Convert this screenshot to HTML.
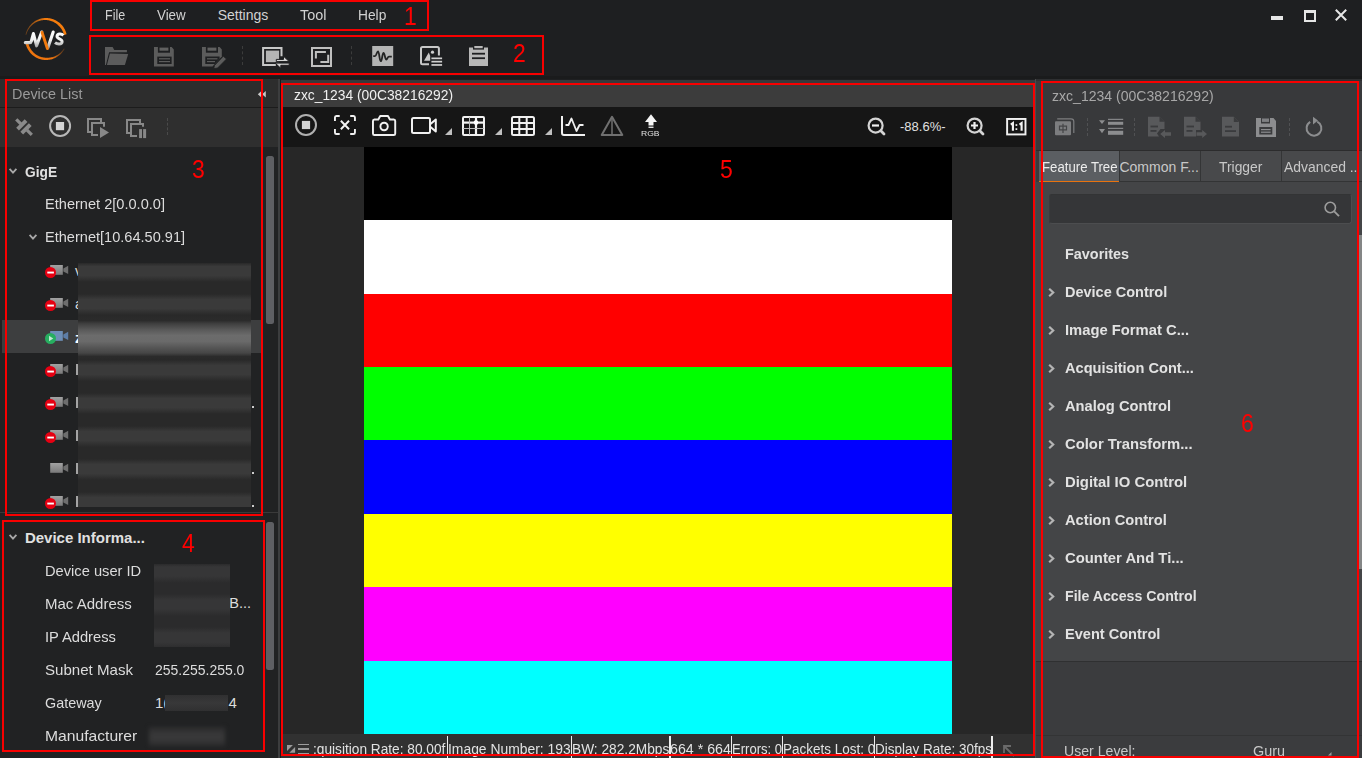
<!DOCTYPE html>
<html>
<head>
<meta charset="utf-8">
<title>MVS</title>
<style>
*{box-sizing:border-box;margin:0;padding:0}
html,body{width:1362px;height:758px;overflow:hidden;background:#1e1f21;font-family:"Liberation Sans",sans-serif;}
#app{position:relative;width:1362px;height:758px;overflow:hidden;background:#1e1f21}
.abs{position:absolute}
.t{position:absolute;white-space:nowrap;transform-origin:0 50%;line-height:1}
.red{position:absolute;border:2px solid #f80000;pointer-events:none;z-index:5}
.num{position:absolute;color:#f00;font-size:25px;line-height:1;white-space:nowrap;z-index:5;transform:scaleX(0.92);transform-origin:0 50%}
svg{position:absolute;overflow:visible}
</style>
</head>
<body>
<div id="app">



<!-- ===== TOP BAR ===== -->
<div class="abs" id="topbar" style="left:0;top:0;width:1362px;height:76px;background:#1e1f21"></div>
<div class="abs" style="left:0;top:76px;width:1362px;height:3px;background:#1a1b1c"></div>

<!-- logo -->
<svg id="logo" style="left:22px;top:15px" width="48" height="48" viewBox="0 0 48 48">
  <defs>
    <linearGradient id="lgu" gradientUnits="userSpaceOnUse" x1="3" y1="0" x2="24" y2="0"><stop offset="0" stop-color="#f0780e" stop-opacity="0.35"/><stop offset="1" stop-color="#f57c0c" stop-opacity="1"/></linearGradient>
    <linearGradient id="lgl" gradientUnits="userSpaceOnUse" x1="30" y1="0" x2="43" y2="0"><stop offset="0" stop-color="#ee740e" stop-opacity="1"/><stop offset="1" stop-color="#e8700e" stop-opacity="0.2"/></linearGradient>
    <linearGradient id="lgw" gradientUnits="userSpaceOnUse" x1="0" y1="17" x2="0" y2="32"><stop offset="0" stop-color="#ffffff"/><stop offset="0.55" stop-color="#f0f0f0"/><stop offset="1" stop-color="#a8a8a8"/></linearGradient>
  </defs>
  <path d="M3.56 19.63 L3.78 18.71 L4.04 17.80 L4.34 16.90 L4.68 16.02 L5.05 15.15 L5.47 14.30 L5.93 13.47 L6.42 12.67 L6.95 11.88 L7.51 11.12 L8.11 10.38 L8.74 9.68 L9.40 9.00 L10.09 8.35 L10.81 7.74 L11.56 7.16 L12.33 6.61 L13.13 6.09 L13.95 5.62 L14.78 5.18 L15.64 4.78 L16.52 4.42 L17.41 4.09 L18.31 3.81 L19.23 3.57 L20.15 3.37 L21.09 3.22 L22.03 3.10 L22.97 3.03 L23.92 3.00 L24.86 3.01 L25.81 3.07 L26.75 3.17 L27.69 3.31 L28.62 3.49 L29.54 3.72 L30.44 3.98 L31.34 4.29 L32.22 4.63 L33.09 5.02 L33.93 5.44 L34.76 5.91 L35.56 6.40 L36.34 6.94 L37.10 7.51 L37.83 8.11 L38.53 8.75 L39.21 9.41 L39.85 10.11 L40.46 10.83 L41.04 11.58 L41.58 12.36 L42.08 13.16 L42.56 13.98 L42.99 14.82 L43.38 15.68 L43.74 16.56 L44.05 17.45 L44.33 18.36 L44.56 19.28 L41.93 19.88 L41.73 19.08 L41.49 18.29 L41.21 17.52 L40.90 16.75 L40.56 16.00 L40.18 15.27 L39.77 14.55 L39.33 13.86 L38.86 13.18 L38.36 12.52 L37.82 11.89 L37.26 11.29 L36.68 10.71 L36.07 10.15 L35.45 9.61 L34.81 9.07 L34.15 8.57 L33.47 8.09 L32.76 7.65 L32.04 7.24 L31.29 6.85 L30.52 6.51 L29.74 6.19 L28.95 5.91 L28.14 5.67 L27.31 5.47 L26.48 5.30 L25.64 5.16 L24.79 5.07 L23.93 5.01 L23.08 5.00 L22.22 5.02 L21.36 5.08 L20.50 5.18 L19.64 5.32 L18.79 5.50 L17.95 5.71 L17.12 5.97 L16.29 6.26 L15.48 6.59 L14.69 6.96 L13.91 7.36 L13.14 7.80 L12.40 8.28 L11.67 8.79 L10.97 9.33 L10.29 9.91 L9.64 10.51 L9.01 11.15 L8.41 11.82 L7.84 12.51 L7.31 13.23 L6.80 13.98 L6.33 14.75 L5.89 15.54 L5.48 16.35 L5.12 17.18 L4.79 18.03 L4.50 18.90 L4.24 19.78 Z" fill="url(#lgu)"/>
  <path d="M3.26 26.56 L3.38 27.44 L3.55 28.31 L3.75 29.17 L3.98 30.02 L4.25 30.87 L4.56 31.70 L4.90 32.51 L5.28 33.32 L5.69 34.10 L6.13 34.87 L6.61 35.62 L7.11 36.34 L7.65 37.05 L8.21 37.73 L8.80 38.39 L9.42 39.02 L10.07 39.63 L10.74 40.20 L11.44 40.75 L12.16 41.27 L12.89 41.76 L13.65 42.22 L14.43 42.64 L15.23 43.03 L16.04 43.39 L16.86 43.71 L17.70 44.00 L18.55 44.25 L19.41 44.47 L20.27 44.65 L21.15 44.79 L22.03 44.90 L22.91 44.97 L23.79 45.00 L24.68 44.99 L25.56 44.95 L26.45 44.87 L27.32 44.75 L28.20 44.60 L29.06 44.41 L29.92 44.18 L30.76 43.91 L31.60 43.62 L32.42 43.28 L33.22 42.91 L34.01 42.51 L34.78 42.08 L35.54 41.61 L36.27 41.11 L36.98 40.59 L37.67 40.03 L38.33 39.44 L38.97 38.83 L39.58 38.19 L40.17 37.52 L40.72 36.83 L41.25 36.12 L41.75 35.39 L42.21 34.63 L42.64 33.86 L41.94 33.48 L41.47 34.20 L40.97 34.89 L40.45 35.56 L39.90 36.20 L39.33 36.82 L38.73 37.41 L38.11 37.97 L37.47 38.51 L36.81 39.02 L36.13 39.49 L35.43 39.94 L34.72 40.35 L33.99 40.74 L33.25 41.09 L32.49 41.40 L31.73 41.69 L30.96 41.94 L30.18 42.16 L29.39 42.34 L28.60 42.49 L27.80 42.61 L27.00 42.69 L26.21 42.74 L25.41 42.75 L24.62 42.73 L23.83 42.69 L23.04 42.65 L22.26 42.57 L21.48 42.47 L20.70 42.32 L19.94 42.15 L19.18 41.94 L18.43 41.71 L17.70 41.44 L16.97 41.14 L16.26 40.81 L15.57 40.45 L14.89 40.06 L14.23 39.65 L13.58 39.21 L12.96 38.74 L12.36 38.24 L11.78 37.72 L11.22 37.18 L10.69 36.62 L10.18 36.03 L9.69 35.42 L9.24 34.80 L8.81 34.15 L8.41 33.49 L8.03 32.81 L7.69 32.12 L7.37 31.42 L7.09 30.70 L6.84 29.97 L6.61 29.23 L6.42 28.49 L6.26 27.74 L6.14 26.98 L6.04 26.22 Z" fill="url(#lgl)"/>
  <path d="M3.3 27.6 H7.6 Q9 27.6 9.4 26 L11.4 18.6 L14.6 30.8 L19.7 17" fill="none" stroke="url(#lgw)" stroke-width="3.1" stroke-linejoin="round" stroke-linecap="round"/>
  <path d="M31.2 17 L26 32.5" fill="none" stroke="url(#lgw)" stroke-width="3.1" stroke-linecap="round"/>
  <path d="M20 17.3 L25.4 33.6" fill="none" stroke="#f27a0e" stroke-width="2.9" stroke-linecap="round"/>
  <path d="M41.4 20.3 C39.6 18.6 35.4 18.5 35 21.2 C34.7 24 40.4 23.6 40.1 26.8 C39.8 29.8 35.2 29.6 33 27.7" fill="none" stroke="url(#lgw)" stroke-width="3" stroke-linecap="butt"/>
</svg>

<!-- menu -->


<!-- window controls -->
<div class="abs" style="left:1271px;top:16.4px;width:12.3px;height:3.8px;background:#e6e6e6"></div>
<div class="abs" style="left:1304px;top:10px;width:12px;height:12px;border:2px solid #e6e6e6;border-top-width:3px"></div>
<svg style="left:1335px;top:9px" width="12" height="12" viewBox="0 0 12 12"><path d="M0.8 0.8 L11.2 11.2 M11.2 0.8 L0.8 11.2" stroke="#e6e6e6" stroke-width="2" fill="none"/></svg>

<!-- main toolbar icons -->
<!-- folder -->
<svg style="left:105px;top:46px" width="24" height="20" viewBox="0 0 24 20">
  <path d="M0 19 V1 H7.6 L9.3 3.9 H21.9 V6.2 H4.1 L0.9 19 Z" fill="#5c5c5c"/>
  <path d="M4.9 7.4 L23.2 7.9 L19.9 19 H1.9 Z" fill="#5c5c5c"/>
</svg>
<!-- save -->
<svg style="left:154px;top:46.6px" width="20" height="19.5" viewBox="0 0 20 19.5">
  <path d="M0 0 H17.6 L19.8 2.4 V19.5 H0 Z" fill="#5c5c5c"/>
  <rect x="3.9" y="0" width="12.1" height="5.7" fill="#1e1f21"/>
  <rect x="5.5" y="0.6" width="8.9" height="3.1" fill="#606060"/>
  <rect x="3.3" y="9.6" width="14.3" height="7.4" fill="#1e1f21"/>
  <rect x="5" y="11.2" width="11" height="1.2" fill="#5c5c5c"/><rect x="5" y="14" width="11" height="1.2" fill="#5c5c5c"/>
</svg>
<!-- save edit -->
<svg style="left:202px;top:46.6px" width="25" height="21" viewBox="0 0 25 21">
  <path d="M0 0 H17.6 L19.8 2.4 V9.5 L10.5 19.5 H0 Z" fill="#5c5c5c"/>
  <rect x="3.9" y="0" width="12.1" height="5.7" fill="#1e1f21"/>
  <rect x="5.5" y="0.6" width="8.9" height="3.1" fill="#606060"/>
  <path d="M3.3 9.6 H17.6 V11.8 L12.8 17 H3.3 Z" fill="#1e1f21"/>
  <rect x="5" y="11.2" width="10.5" height="1.2" fill="#5c5c5c"/><rect x="5" y="14" width="8" height="1.2" fill="#5c5c5c"/>
  <path d="M21.3 9.2 L24.5 12 L15.6 21 L11.8 21.6 L12.5 18.4 Z" fill="#5c5c5c" stroke="#1e1f21" stroke-width="0.8"/>
</svg>
<div class="abs" style="left:242px;top:46px;width:0;height:19px;border-left:1px dashed #3c3c3c"></div>
<!-- multi window swap -->
<svg style="left:262px;top:47px" width="28" height="21" viewBox="0 0 28 21">
  <path d="M13.8 18 H1.1 V1 H19.5 V9.2" fill="none" stroke="#c8c8c8" stroke-width="2"/>
  <rect x="3.9" y="3.6" width="13.2" height="11.6" fill="#b4b4b4"/>
  <path d="M14.3 12.4 H21.5 V9.2 L27.2 14.6 H14.3 Z" fill="#d4d4d4" stroke="#1e1f21" stroke-width="1"/>
  <path d="M27.2 16.1 V18.3 H18.8 V21.3 L13.2 16.1 Z" fill="#d4d4d4" stroke="#1e1f21" stroke-width="1"/>
</svg>
<!-- fullscreen -->
<svg style="left:311px;top:46.8px" width="21" height="20" viewBox="0 0 21 20">
  <rect x="1" y="1" width="19" height="18" fill="none" stroke="#c0c0c0" stroke-width="2"/>
  <path d="M4.9 11.6 V4.9 H14.9" fill="none" stroke="#c0c0c0" stroke-width="2"/>
  <path d="M17.2 7.7 V15 H9.4" fill="none" stroke="#c0c0c0" stroke-width="2"/>
</svg>
<div class="abs" style="left:351px;top:46px;width:0;height:19px;border-left:1px dashed #3c3c3c"></div>
<!-- wave -->
<svg style="left:372px;top:46px" width="21" height="20" viewBox="0 0 21 20">
  <rect x="0.2" y="0" width="21" height="20" fill="#b4b4b4"/>
  <path d="M1.2 10.2 H3 C4.5 10.2 4.8 5.3 6 5.3 C7.4 5.3 7.4 15.2 8.8 15.2 C10.2 15.2 10.2 7 11.5 7 C12.8 7 13 13.6 14.3 13.6 C15.5 13.6 15.5 10.6 17 10.6 H19.8" fill="none" stroke="#242424" stroke-width="1.8" stroke-linejoin="round"/>
</svg>
<!-- image list -->
<svg style="left:420px;top:46.3px" width="23" height="20" viewBox="0 0 23 20">
  <path d="M18.9 9.5 V2.5 Q18.9 1 17.4 1 H2.5 Q1 1 1 2.5 V16.7 Q1 18.2 2.5 18.2 H9" fill="none" stroke="#c8c8c8" stroke-width="2"/>
  <path d="M4 14.8 L8.8 6.5 L10.2 10 V14.8 Z" fill="#c8c8c8"/>
  <circle cx="12.5" cy="6.2" r="1.6" fill="#d0d0d0"/>
  <rect x="11.4" y="11.5" width="10.7" height="1.7" fill="#d0d0d0"/>
  <rect x="11.4" y="14.8" width="10.7" height="1.7" fill="#d0d0d0"/>
  <rect x="11.4" y="18.1" width="10.7" height="1.7" fill="#d0d0d0"/>
</svg>
<!-- clipboard -->
<svg style="left:469px;top:46px" width="19" height="20" viewBox="0 0 19 20">
  <path d="M0 1.5 H4 V0 H15 V1.5 H19 V20 H0 Z" fill="#b8b8b8"/>
  <rect x="4" y="0" width="11" height="3.6" fill="#1e1f21"/>
  <rect x="5.3" y="0" width="8.4" height="2.2" fill="#b8b8b8"/>
  <rect x="3" y="6.8" width="13" height="1.8" fill="#1e1f21"/>
  <rect x="3" y="11.3" width="13" height="1.8" fill="#1e1f21"/>
</svg>

<!-- ===== LEFT PANEL ===== -->
<svg width="0" height="0" style="left:0;top:0"><defs><linearGradient id="camg" x1="0" y1="0" x2="0" y2="1"><stop offset="0" stop-color="#a2a2a2"/><stop offset="1" stop-color="#7a7a7a"/></linearGradient></defs></svg>
<div class="abs" id="leftpanel" style="left:0;top:79px;width:278px;height:679px;background:#212223"></div>
<div class="abs" style="left:278px;top:79px;width:2px;height:679px;background:#3c3d3e"></div>
<div class="abs" style="left:0;top:79px;width:278px;height:28px;background:#2d2d2d"></div>
<div class="abs" style="left:0;top:107px;width:278px;height:1px;background:#1c1c1c"></div>
<div class="abs" style="left:0;top:108px;width:278px;height:39px;background:#2f2f2f"></div>
<svg style="left:256.5px;top:90.9px" width="9.6" height="6.4" viewBox="0 0 10 8"><path d="M4.6 0 V8 L0 4 Z M10 0 V8 L5.4 4 Z" fill="#c8c8c8"/></svg>
<!-- left toolbar icons -->
<svg style="left:0px;top:0px" width="40" height="140" viewBox="0 0 40 140">
  <g transform="translate(23.9,126.9) rotate(45)" fill="#8a8a8a">
    <rect x="-4.9" y="-6" width="3.9" height="12"/><rect x="-10.8" y="-1.6" width="6.5" height="3.2"/>
    <rect x="1" y="-6" width="3.9" height="12"/><rect x="4.5" y="-1.6" width="6.7" height="3.2"/>
  </g>
</svg>
<svg style="left:49px;top:115px" width="22" height="22" viewBox="0 0 22 22"><circle cx="11.1" cy="11" r="10" fill="none" stroke="#b8b8b8" stroke-width="2"/><rect x="6.9" y="7" width="8.2" height="8.2" fill="#d4d4d4"/></svg>
<svg style="left:87px;top:118px" width="23" height="21" viewBox="0 0 23 21">
  <path d="M4 14 H1 V1 H14 V4" fill="none" stroke="#888" stroke-width="2"/>
  <path d="M11 17 H5 V5 H17 V8.7" fill="none" stroke="#888" stroke-width="2"/>
  <path d="M13 9.1 L22 14.6 L13 20.1 Z" fill="#888"/>
</svg>
<svg style="left:126px;top:119px" width="21" height="20" viewBox="0 0 21 20">
  <path d="M4 14 H1 V1 H14 V4" fill="none" stroke="#888" stroke-width="2"/>
  <path d="M11 17 H5 V5 H17 V7.7" fill="none" stroke="#888" stroke-width="2"/>
  <rect x="13.1" y="10.1" width="2.9" height="9" fill="#888"/><rect x="17.1" y="10.1" width="3" height="9" fill="#888"/>
</svg>
<div class="abs" style="left:167px;top:118px;width:0;height:17px;border-left:1px dashed #4a4a4a"></div>

<!-- tree -->
<svg style="left:8.6px;top:167.5px" width="8" height="6" viewBox="0 0 8 6"><path d="M0.6 0.8 L4 4.6 L7.4 0.8" fill="none" stroke="#a8a8a8" stroke-width="1.8"/></svg>
<svg style="left:28.5px;top:234.2px" width="8" height="6" viewBox="0 0 8 6"><path d="M0.6 0.8 L4 4.6 L7.4 0.8" fill="none" stroke="#a8a8a8" stroke-width="1.8"/></svg>
<div class="abs" style="left:2px;top:320px;width:259px;height:33px;background:#3d3e3f"></div>
<svg style="left:45px;top:263px" width="24" height="16" viewBox="0 0 24 16"><rect x="5.2" y="2" width="12.6" height="9.8" fill="url(#camg)"/><path d="M18.3 5.4 L23.2 2.8 V11 L18.3 8.4 Z" fill="#6e6e6e"/><circle cx="5.5" cy="9.5" r="5.5" fill="#e60012"/><rect x="2.3" y="8.6" width="6.6" height="1.9" fill="#fff"/></svg>
<svg style="left:45px;top:296px" width="24" height="16" viewBox="0 0 24 16"><rect x="5.2" y="2" width="12.6" height="9.8" fill="url(#camg)"/><path d="M18.3 5.4 L23.2 2.8 V11 L18.3 8.4 Z" fill="#6e6e6e"/><circle cx="5.5" cy="9.5" r="5.5" fill="#e60012"/><rect x="2.3" y="8.6" width="6.6" height="1.9" fill="#fff"/></svg>
<svg style="left:45px;top:329px" width="24" height="16" viewBox="0 0 24 16"><rect x="5.2" y="2" width="12.6" height="9.8" fill="#6d8fb8"/><path d="M18.3 5.4 L23.2 2.8 V11 L18.3 8.4 Z" fill="#5d7ea8"/><circle cx="5.5" cy="9.5" r="5.5" fill="#27ae60"/><path d="M4 6.8 L8.3 9.5 L4 12.2 Z" fill="#bfe8d0"/></svg>
<svg style="left:45px;top:362px" width="24" height="16" viewBox="0 0 24 16"><rect x="5.2" y="2" width="12.6" height="9.8" fill="url(#camg)"/><path d="M18.3 5.4 L23.2 2.8 V11 L18.3 8.4 Z" fill="#6e6e6e"/><circle cx="5.5" cy="9.5" r="5.5" fill="#e60012"/><rect x="2.3" y="8.6" width="6.6" height="1.9" fill="#fff"/></svg>
<svg style="left:45px;top:395px" width="24" height="16" viewBox="0 0 24 16"><rect x="5.2" y="2" width="12.6" height="9.8" fill="url(#camg)"/><path d="M18.3 5.4 L23.2 2.8 V11 L18.3 8.4 Z" fill="#6e6e6e"/><circle cx="5.5" cy="9.5" r="5.5" fill="#e60012"/><rect x="2.3" y="8.6" width="6.6" height="1.9" fill="#fff"/></svg>
<svg style="left:45px;top:428px" width="24" height="16" viewBox="0 0 24 16"><rect x="5.2" y="2" width="12.6" height="9.8" fill="url(#camg)"/><path d="M18.3 5.4 L23.2 2.8 V11 L18.3 8.4 Z" fill="#6e6e6e"/><circle cx="5.5" cy="9.5" r="5.5" fill="#e60012"/><rect x="2.3" y="8.6" width="6.6" height="1.9" fill="#fff"/></svg>
<svg style="left:45px;top:461px" width="24" height="16" viewBox="0 0 24 16"><rect x="5.2" y="2" width="12.6" height="9.8" fill="url(#camg)"/><path d="M18.3 5.4 L23.2 2.8 V11 L18.3 8.4 Z" fill="#6e6e6e"/></svg>
<svg style="left:45px;top:494px" width="24" height="16" viewBox="0 0 24 16"><rect x="5.2" y="2" width="12.6" height="9.8" fill="url(#camg)"/><path d="M18.3 5.4 L23.2 2.8 V11 L18.3 8.4 Z" fill="#6e6e6e"/><circle cx="5.5" cy="9.5" r="5.5" fill="#e60012"/><rect x="2.3" y="8.6" width="6.6" height="1.9" fill="#fff"/></svg>

<div class="abs" style="left:76.2px;top:363.5px;width:1.7px;height:11px;background:#a4a4a4"></div>
<div class="abs" style="left:76.2px;top:396.5px;width:1.7px;height:11px;background:#a4a4a4"></div>
<div class="abs" style="left:76.2px;top:429.5px;width:1.7px;height:11px;background:#a4a4a4"></div>
<div class="abs" style="left:76.2px;top:462.5px;width:1.7px;height:11px;background:#a4a4a4"></div>
<div class="abs" style="left:76.2px;top:495.5px;width:1.7px;height:11px;background:#a4a4a4"></div>
<!-- blur -->
<div class="abs" style="z-index:2;left:77.8px;top:262.5px;width:172.8px;height:244.7px;background:linear-gradient(180deg,#292929 0px,#3a3a3a 3.5px,#3a3a3a 12.5px,#292929 19px,#292929 31px,#3a3a3a 36.5px,#3a3a3a 45.5px,#292929 52px,#2b2b2b 57.5px,#3e3e3e 60.5px,#585858 66.5px,#6c6c6c 72.5px,#6a6a6a 78.5px,#565656 84.5px,#464646 90px,#2b2b2b 93.5px,#292929 97px,#3a3a3a 102.5px,#3a3a3a 111.5px,#292929 118px,#292929 130px,#3a3a3a 135.5px,#3a3a3a 144.5px,#292929 151px,#292929 163px,#3a3a3a 168.5px,#3a3a3a 177.5px,#292929 184px,#292929 196px,#3a3a3a 201.5px,#3a3a3a 210.5px,#292929 217px,#292929 229px,#3a3a3a 234.5px,#3a3a3a 243.5px,#292929 250px)"></div>
<div class="abs" style="left:251.5px;top:406px;width:2px;height:2.4px;background:#ccc"></div>
<div class="abs" style="left:251.5px;top:472px;width:2px;height:2.4px;background:#ccc"></div>
<div class="abs" style="left:251.5px;top:505px;width:2px;height:2.4px;background:#ccc"></div>
<!-- scrollbars -->
<div class="abs" style="left:266px;top:156px;width:8px;height:167.6px;background:#5e5f63;border-radius:2.5px"></div>
<div class="abs" style="left:0;top:512px;width:278px;height:1px;background:#3a3a3a"></div>
<div class="abs" style="left:266px;top:522px;width:8px;height:148px;background:#5e5f63;border-radius:2.5px"></div>

<!-- device info -->
<svg style="left:8.5px;top:534px" width="8" height="6" viewBox="0 0 8 6"><path d="M0.6 0.8 L4 4.6 L7.4 0.8" fill="none" stroke="#a8a8a8" stroke-width="1.8"/></svg>
<div class="abs" style="z-index:2;left:154px;top:563.5px;width:75.8px;height:83px;background:linear-gradient(180deg,#2b2b2c 0px,#363637 3px,#363637 12px,#2b2b2c 19px,#2b2b2c 30px,#363637 36px,#363637 45px,#2b2b2c 52px,#2b2b2c 63px,#363637 69px,#363637 78px,#2b2b2c 85px)"></div>
<div class="abs" style="z-index:2;left:165px;top:694.5px;width:63px;height:16.5px;background:linear-gradient(180deg,#303031,#383839 50%,#303031)"></div>
<div class="abs" style="z-index:2;left:149px;top:727px;width:75.5px;height:18.6px;filter:blur(2px);background:linear-gradient(180deg,#2c2c2d,#39393a 45%,#39393a 60%,#2c2c2d)"></div>

<!-- ===== CENTER PANEL ===== -->
<div class="abs" style="left:280px;top:79px;width:1px;height:679px;background:#1a1a1b"></div>
<div class="abs" style="left:281px;top:80px;width:754px;height:3px;background:#38393a"></div>
<div class="abs" style="left:281px;top:83px;width:754px;height:24px;background:#3c3c3c"></div>
<div class="abs" style="left:281px;top:107px;width:754px;height:40px;background:#161616"></div>
<div class="abs" style="left:281px;top:147px;width:754px;height:587px;background:#272727"></div>
<div class="abs" style="left:281px;top:734px;width:754px;height:24px;background:#313131"></div>
<!-- color bars -->
<div class="abs" style="left:364px;top:147px;width:588px;height:587px;background:linear-gradient(180deg,#000 0,#000 73.4px,#fff 73.4px,#fff 146.8px,#f00 146.8px,#f00 220.2px,#0f0 220.2px,#0f0 293.5px,#00f 293.5px,#00f 366.9px,#ff0 366.9px,#ff0 440.3px,#f0f 440.3px,#f0f 513.7px,#0ff 513.7px,#0ff 587px)"></div>

<!-- center toolbar icons -->
<svg style="left:295px;top:114.2px" width="22" height="22" viewBox="0 0 22 22"><circle cx="11" cy="11" r="10" fill="none" stroke="#b0b0b0" stroke-width="2"/><rect x="6.9" y="6.9" width="8.2" height="8.2" fill="#d4d4d4"/></svg>
<svg style="left:333.8px;top:115px" width="21.9" height="20" viewBox="0 0 23 20" preserveAspectRatio="none">
  <path d="M1 6 V2.5 Q1 1 2.5 1 H6 M17 1 H20.5 Q22 1 22 2.5 V6 M22 14 V17.5 Q22 19 20.5 19 H17 M6 19 H2.5 Q1 19 1 17.5 V14" fill="none" stroke="#f0f0f0" stroke-width="2"/>
  <path d="M7.2 5.8 L15.8 14.2 M15.8 5.8 L7.2 14.2" stroke="#f4f4f4" stroke-width="2.1" fill="none"/>
</svg>
<svg style="left:372px;top:115px" width="24.2" height="21" viewBox="0 0 25 21" preserveAspectRatio="none">
  <path d="M2.5 4.5 H6.5 L8.5 1 H16.5 L18.5 4.5 H22.5 Q24 4.5 24 6 V18.5 Q24 20 22.5 20 H2.5 Q1 20 1 18.5 V6 Q1 4.5 2.5 4.5 Z" fill="none" stroke="#f0f0f0" stroke-width="2" stroke-linejoin="round"/>
  <circle cx="12.5" cy="11.5" r="3.8" fill="none" stroke="#f0f0f0" stroke-width="2"/>
</svg>
<svg style="left:410.6px;top:117px" width="27" height="17" viewBox="0 0 27 17">
  <rect x="1" y="1" width="18" height="15" rx="1.5" fill="none" stroke="#f0f0f0" stroke-width="2"/>
  <path d="M19.5 7 L24.8 2.5 V14.5 L19.5 10" fill="none" stroke="#f4f4f4" stroke-width="2" stroke-linejoin="round"/>
</svg>
<svg style="left:445px;top:128px" width="7" height="7" viewBox="0 0 7 7"><path d="M7 0 V7 H0 Z" fill="#c0c0c0"/></svg>
<svg style="left:462px;top:116px" width="23" height="20" viewBox="0 0 23 20">
  <rect x="1" y="1" width="21" height="18" rx="1" fill="none" stroke="#f0f0f0" stroke-width="2"/>
  <path d="M1 6.6 H22" stroke="#f4f4f4" stroke-width="2.2"/>
  <path d="M14 1 V19" stroke="#f4f4f4" stroke-width="2.2"/>
  <path d="M7.5 1 V19 M1 12.5 H22" stroke="#bbb" stroke-width="1"/>
  <circle cx="14" cy="6.6" r="2.4" fill="#fff"/>
</svg>
<svg style="left:495px;top:128px" width="7" height="7" viewBox="0 0 7 7"><path d="M7 0 V7 H0 Z" fill="#c0c0c0"/></svg>
<svg style="left:511px;top:116px" width="24" height="20" viewBox="0 0 24 20">
  <rect x="1" y="1" width="22" height="18" rx="1.5" fill="none" stroke="#f0f0f0" stroke-width="2"/>
  <path d="M1 7 H23 M1 13 H23 M8.3 1 V19 M15.7 1 V19" stroke="#f0f0f0" stroke-width="2"/>
</svg>
<svg style="left:545px;top:128px" width="7" height="7" viewBox="0 0 7 7"><path d="M7 0 V7 H0 Z" fill="#c0c0c0"/></svg>
<svg style="left:561px;top:116px" width="24" height="20" viewBox="0 0 24 20">
  <path d="M1 0 V17 Q1 19 3 19 H24" fill="none" stroke="#f0f0f0" stroke-width="2"/>
  <path d="M4.5 9 H7.5 L10.5 2.5 L15.5 15 L18.5 9 H22.5" fill="none" stroke="#f0f0f0" stroke-width="1.8" stroke-linejoin="round"/>
</svg>
<svg style="left:600px;top:115px" width="24" height="21" viewBox="0 0 24 21">
  <path d="M12 1.8 L22.3 20 H1.7 Z" fill="none" stroke="#707070" stroke-width="2" stroke-linejoin="round"/>
  <path d="M12 1.8 V20" stroke="#707070" stroke-width="1.5"/>
</svg>
<svg style="left:642px;top:114px" width="18" height="23" viewBox="0 0 18 23">
  <path d="M9 0.3 L15 8 H11.5 V11.5 H6.5 V8 H3 Z" fill="#f4f4f4"/>
  <rect x="6.5" y="12.6" width="5" height="1.3" fill="#f4f4f4"/>
</svg>

<!-- zoom controls -->
<svg style="left:867px;top:117px" width="19" height="19" viewBox="0 0 19 19">
  <circle cx="8.6" cy="8.6" r="7" fill="none" stroke="#d4d4d4" stroke-width="2.2"/>
  <path d="M13.8 13.8 L17 17" stroke="#d4d4d4" stroke-width="2.8" stroke-linecap="round"/>
  <rect x="5" y="7.4" width="7" height="2.2" fill="#f0f0f0"/>
</svg>
<svg style="left:966px;top:117px" width="19" height="19" viewBox="0 0 19 19">
  <circle cx="8.6" cy="8.6" r="7" fill="none" stroke="#d4d4d4" stroke-width="2.2"/>
  <path d="M13.8 13.8 L17 17" stroke="#d4d4d4" stroke-width="2.8" stroke-linecap="round"/>
  <path d="M5 8.5 H12 M8.5 5 V12" stroke="#f0f0f0" stroke-width="2.2"/>
</svg>
<svg style="left:1005.6px;top:117.6px" width="20.6" height="17.4" viewBox="0 0 21 18">
  <rect x="1" y="1" width="19" height="16" fill="none" stroke="#f0f0f0" stroke-width="2"/>
  <path d="M4.8 6.8 L7 5.3 V13.2 M13.8 6.8 L16 5.3 V13.2" fill="none" stroke="#f4f4f4" stroke-width="2.2"/>
  <rect x="9.7" y="6.4" width="1.8" height="1.8" fill="#f0f0f0"/><rect x="9.7" y="10.6" width="1.8" height="1.8" fill="#f0f0f0"/>
</svg>

<!-- status bar -->
<svg style="left:287px;top:745px" width="9" height="8" viewBox="0 0 9 8"><path d="M0 0 H5.9 L0 6 Z" fill="#9a9a9a"/><path d="M8.1 2.1 V7.8 H2.3 Z" fill="#9a9a9a"/></svg>
<div class="abs" style="left:298px;top:744px;width:11px;height:1.1px;background:#9c9c9c"></div>
<div class="abs" style="left:298px;top:748.1px;width:11px;height:1.8px;background:#9c9c9c"></div>
<div class="abs" style="left:298px;top:752.9px;width:11px;height:1.4px;background:#9c9c9c"></div>
<div class="abs" style="left:446.8px;top:735.6px;width:1.4px;height:23px;background:#ececec"></div>
<div class="abs" style="left:570.8px;top:735.6px;width:1.4px;height:23px;background:#ececec"></div>
<div class="abs" style="left:669.2px;top:735.6px;width:1.4px;height:23px;background:#ececec"></div>
<div class="abs" style="left:730.8px;top:735.6px;width:1.4px;height:23px;background:#ececec"></div>
<div class="abs" style="left:781.6px;top:735.6px;width:1.4px;height:23px;background:#ececec"></div>
<div class="abs" style="left:873.8px;top:735.6px;width:1.4px;height:23px;background:#ececec"></div>
<div class="abs" style="left:991.3px;top:735.6px;width:1.4px;height:23px;background:#ececec"></div>
<svg style="left:1003px;top:745px" width="12" height="11" viewBox="0 0 12 11"><path d="M1 8 V1 H8 M1.5 1.5 L11 11" fill="none" stroke="#6a6a6a" stroke-width="1.8"/></svg>

<!-- ===== RIGHT PANEL ===== -->
<div class="abs" style="left:1035px;top:79px;width:1.4px;height:679px;background:#4a4b4c"></div>
<div class="abs" style="left:1036.4px;top:79px;width:326px;height:2px;background:#2e2f31"></div>
<div class="abs" style="left:1036.4px;top:81px;width:326px;height:70px;background:#38393b"></div>
<div class="abs" style="left:1036.4px;top:150px;width:326px;height:1px;background:#2c2c2d"></div>
<div class="abs" style="left:1036.4px;top:151px;width:326px;height:31px;background:#3a3b3d"></div>
<div class="abs" style="left:1119px;top:151px;width:243px;height:31px;background:#48494b"></div>
<div class="abs" style="left:1119px;top:151px;width:1px;height:31px;background:#343536"></div>
<div class="abs" style="left:1200px;top:151px;width:1px;height:31px;background:#343536"></div>
<div class="abs" style="left:1281px;top:151px;width:1px;height:31px;background:#343536"></div>
<div class="abs" style="left:1036.4px;top:182px;width:326px;height:576px;background:#444547"></div>
<div class="abs" style="left:1119px;top:181px;width:243px;height:1px;background:#333435"></div>
<div class="abs" style="left:1039px;top:151px;width:80px;height:29.7px;background:#5b5e62"></div>
<div class="abs" style="left:1039px;top:180.6px;width:80px;height:1.5px;background:#e8730f"></div>
<div class="abs" style="left:1048.7px;top:193.7px;width:303.3px;height:30.5px;background:#353638;border:1px solid #4c4d4f;border-top-color:#333435;border-left-color:#3a3b3d;border-radius:3px"></div>
<svg style="left:1324px;top:201px" width="16" height="16" viewBox="0 0 16 16"><circle cx="6.3" cy="6.5" r="5.2" fill="none" stroke="#9c9c9c" stroke-width="1.6"/><path d="M10.2 10.4 L15 15.2" stroke="#9c9c9c" stroke-width="1.9"/></svg>
<div class="abs" style="left:1036.4px;top:661px;width:326px;height:97px;background:#3b3c3e"></div>
<div class="abs" style="left:1036.4px;top:661px;width:326px;height:1px;background:#2f3031"></div>
<div class="abs" style="left:1036.4px;top:735px;width:326px;height:1px;background:#333435"></div>
<div class="abs" style="left:1359px;top:235px;width:3px;height:334px;background:#848686"></div>

<svg style="left:1328px;top:752px" width="3.5" height="3.5" viewBox="0 0 5 5"><path d="M5 0 V5 H0 Z" fill="#9a9a9a"/></svg>
<svg style="left:1048.3px;top:287.8px" width="7" height="9" viewBox="0 0 7 9"><path d="M1.2 0.8 L5.2 4.5 L1.2 8.2" fill="none" stroke="#b4b4b4" stroke-width="2.2"/></svg>
<svg style="left:1048.3px;top:325.8px" width="7" height="9" viewBox="0 0 7 9"><path d="M1.2 0.8 L5.2 4.5 L1.2 8.2" fill="none" stroke="#b4b4b4" stroke-width="2.2"/></svg>
<svg style="left:1048.3px;top:363.8px" width="7" height="9" viewBox="0 0 7 9"><path d="M1.2 0.8 L5.2 4.5 L1.2 8.2" fill="none" stroke="#b4b4b4" stroke-width="2.2"/></svg>
<svg style="left:1048.3px;top:401.8px" width="7" height="9" viewBox="0 0 7 9"><path d="M1.2 0.8 L5.2 4.5 L1.2 8.2" fill="none" stroke="#b4b4b4" stroke-width="2.2"/></svg>
<svg style="left:1048.3px;top:439.8px" width="7" height="9" viewBox="0 0 7 9"><path d="M1.2 0.8 L5.2 4.5 L1.2 8.2" fill="none" stroke="#b4b4b4" stroke-width="2.2"/></svg>
<svg style="left:1048.3px;top:477.8px" width="7" height="9" viewBox="0 0 7 9"><path d="M1.2 0.8 L5.2 4.5 L1.2 8.2" fill="none" stroke="#b4b4b4" stroke-width="2.2"/></svg>
<svg style="left:1048.3px;top:515.8px" width="7" height="9" viewBox="0 0 7 9"><path d="M1.2 0.8 L5.2 4.5 L1.2 8.2" fill="none" stroke="#b4b4b4" stroke-width="2.2"/></svg>
<svg style="left:1048.3px;top:553.8px" width="7" height="9" viewBox="0 0 7 9"><path d="M1.2 0.8 L5.2 4.5 L1.2 8.2" fill="none" stroke="#b4b4b4" stroke-width="2.2"/></svg>
<svg style="left:1048.3px;top:591.8px" width="7" height="9" viewBox="0 0 7 9"><path d="M1.2 0.8 L5.2 4.5 L1.2 8.2" fill="none" stroke="#b4b4b4" stroke-width="2.2"/></svg>
<svg style="left:1048.3px;top:629.8px" width="7" height="9" viewBox="0 0 7 9"><path d="M1.2 0.8 L5.2 4.5 L1.2 8.2" fill="none" stroke="#b4b4b4" stroke-width="2.2"/></svg>
<!-- right toolbar icons -->
<svg style="left:1055px;top:118px" width="20" height="18" viewBox="0 0 20 18">
  <path d="M2.2 0.8 H16 Q18.8 0.8 18.8 3.6 V15" fill="none" stroke="#7c7d7f" stroke-width="1.2"/>
  <rect x="0" y="3.2" width="16" height="14" rx="1" fill="#7c7d7f"/>
  <path d="M4.5 8.2 H11.5 V11.8 H4.5 Z M8 5.8 V15" fill="none" stroke="#444547" stroke-width="1.2"/>
</svg>
<div class="abs" style="left:1087px;top:118px;width:0;height:18px;border-left:1px dashed #505153"></div>
<svg style="left:1099px;top:118px" width="25" height="18" viewBox="0 0 25 18">
  <path d="M0 2.2 H6 L3 6 Z M0 11 H6 L3 15.2 Z" fill="#8c8d8f"/>
  <rect x="9" y="0.8" width="15.2" height="1.1" fill="#8c8d8f"/><rect x="9" y="3.8" width="15.2" height="3" fill="#8c8d8f"/>
  <rect x="9" y="9.8" width="15.2" height="1.1" fill="#8c8d8f"/><rect x="9" y="12.8" width="15.2" height="4" fill="#8c8d8f"/>
</svg>
<div class="abs" style="left:1134px;top:118px;width:0;height:18px;border-left:1px dashed #505153"></div>
<svg style="left:1148px;top:116px" width="24" height="23" viewBox="0 0 24 23">
  <path d="M0 0.7 H11.5 L16.5 5.7 V13 H12.5 L9 17.5 L11 20.5 H0 Z" fill="#58595b"/>
  <path d="M11.5 0.7 V5.7 H16.5 Z" fill="#3a3b3d"/><path d="M12.5 0.9 L16.3 4.7 H12.5 Z" fill="#58595b" opacity="0"/>
  <rect x="2.5" y="9.6" width="7.5" height="1.8" fill="#3a3b3d"/><rect x="2.5" y="14" width="6" height="1.8" fill="#3a3b3d"/>
  <path d="M12.2 18 L17 14 V16.3 H23 V19.7 H17 V22 Z" fill="#58595b"/>
</svg>
<svg style="left:1184px;top:116px" width="24" height="23" viewBox="0 0 24 23">
  <path d="M0 0.7 H11.5 L16.5 5.7 V14 H12 V20.5 H0 Z" fill="#58595b"/>
  <path d="M11.5 0.7 V5.7 H16.5 Z" fill="#3a3b3d"/>
  <rect x="2.5" y="9.6" width="7.5" height="1.8" fill="#3a3b3d"/><rect x="2.5" y="14" width="6" height="1.8" fill="#3a3b3d"/>
  <path d="M23 18 L18.2 14 V16.3 H12.5 V19.7 H18.2 V22 Z" fill="#58595b"/>
</svg>
<svg style="left:1222px;top:116px" width="17" height="21" viewBox="0 0 17 21">
  <path d="M0 0.7 H11.8 L17 5.9 V20.5 H0 Z" fill="#58595b"/>
  <path d="M11.8 0.7 V5.9 H17 Z" fill="#3a3b3d"/>
  <rect x="3" y="9.8" width="7" height="1.8" fill="#3a3b3d"/><rect x="3" y="14.2" width="11" height="1.8" fill="#3a3b3d"/>
</svg>
<svg style="left:1256px;top:118px" width="20" height="19" viewBox="0 0 20 19">
  <path d="M0 0 H17.5 L20 3 V19 H0 Z" fill="#8c8d8f"/>
  <rect x="5" y="0" width="9" height="5.5" fill="#3a3b3d"/><rect x="6" y="0.5" width="7" height="3.4" fill="#8c8d8f" opacity="0.85"/>
  <rect x="3.3" y="9" width="13" height="7.5" fill="#3a3b3d"/>
  <rect x="5" y="11" width="9.6" height="1.2" fill="#8c8d8f"/><rect x="5" y="13.6" width="9.6" height="1.2" fill="#8c8d8f"/>
</svg>
<div class="abs" style="left:1289px;top:118px;width:0;height:18px;border-left:1px dashed #505153"></div>
<svg style="left:1305px;top:116px" width="18" height="21" viewBox="0 0 18 21">
  <path d="M12.2 5.6 A7.4 7.4 0 1 1 5.2 5.9" fill="none" stroke="#8c8d8f" stroke-width="2"/>
  <path d="M8 0.7 L13 4.6 L8 8.6 Z" fill="#8c8d8f"/>
</svg>

<div class="t" style="left:105.32px;top:8.1px;font-size:14px;color:#d2d2d2;transform:scaleX(0.8936);">File</div>
<div class="t" style="left:157.32px;top:8.1px;font-size:14px;color:#d2d2d2;transform:scaleX(0.9519);">View</div>
<div class="t" style="left:217.72px;top:8.1px;font-size:14px;color:#d2d2d2;">Settings</div>
<div class="t" style="left:300.06px;top:8.1px;font-size:14px;color:#d2d2d2;transform:scaleX(1.0314);">Tool</div>
<div class="t" style="left:357.61px;top:8.1px;font-size:14px;color:#d2d2d2;transform:scaleX(0.9826);">Help</div>
<div class="t" style="left:12.19px;top:85.8px;font-size:15px;color:#9a9a9a;transform:scaleX(0.9601);">Device List</div>
<div class="t" style="left:25.24px;top:163.5px;font-size:15px;color:#e0e0e0;font-weight:bold;transform:scaleX(0.9184);">GigE</div>
<div class="t" style="left:45.18px;top:196.95px;font-size:14.5px;color:#dcdcdc;transform:scaleX(1.0057);">Ethernet 2[0.0.0.0]</div>
<div class="t" style="left:45.18px;top:229.95px;font-size:14.5px;color:#dcdcdc;transform:scaleX(1.0042);">Ethernet[10.64.50.91]</div>
<div class="t" style="left:75.00px;top:263.75px;font-size:14.5px;color:#dcdcdc;">v</div>
<div class="t" style="left:75.00px;top:296.75px;font-size:14.5px;color:#dcdcdc;">a</div>
<div class="t" style="left:75.00px;top:329.5px;font-size:15px;color:#fff;font-weight:bold;">z</div>
<div class="t" style="left:24.90px;top:530px;font-size:15px;color:#e0e0e0;font-weight:bold;">Device Informa...</div>
<div class="t" style="left:44.71px;top:563.7px;font-size:14.5px;color:#dcdcdc;transform:scaleX(1.0118);">Device user ID</div>
<div class="t" style="left:44.71px;top:596.7px;font-size:14.5px;color:#dcdcdc;transform:scaleX(1.0348);">Mac Address</div>
<div class="t" style="left:44.71px;top:629.7px;font-size:14.5px;color:#dcdcdc;transform:scaleX(1.0146);">IP Address</div>
<div class="t" style="left:44.71px;top:662.7px;font-size:14.5px;color:#dcdcdc;transform:scaleX(1.0398);">Subnet Mask</div>
<div class="t" style="left:44.71px;top:695.7px;font-size:14.5px;color:#dcdcdc;transform:scaleX(0.9904);">Gateway</div>
<div class="t" style="left:44.71px;top:728.7px;font-size:14.5px;color:#dcdcdc;transform:scaleX(1.0800);">Manufacturer</div>
<div class="t" style="left:155.15px;top:661.9px;font-size:15px;color:#dcdcdc;transform:scaleX(0.9314);">255.255.255.0</div>
<div class="t" style="left:229.31px;top:596.25px;font-size:14.5px;color:#dcdcdc;">B...</div>
<div class="t" style="left:155.00px;top:694.9px;font-size:15px;color:#dcdcdc;">1(</div>
<div class="t" style="left:228.60px;top:694.9px;font-size:15px;color:#dcdcdc;">4</div>
<div class="t" style="left:293.67px;top:87.5px;font-size:14px;color:#f0f0f0;transform:scaleX(0.9868);">zxc_1234 (00C38216292)</div>
<div class="t" style="left:641.30px;top:130px;font-size:7px;color:#e0e0e0;transform:scaleX(1.2227);">RGB</div>
<div class="t" style="left:900.02px;top:120px;font-size:13px;color:#e0e0e0;">-88.6%-</div>
<div class="t" style="left:313.12px;top:742px;font-size:14px;color:#e2e2e2;transform:scaleX(0.9772);">:quisition Rate: 80.00f</div>
<div class="t" style="left:447.70px;top:742px;font-size:14px;color:#e2e2e2;transform:scaleX(0.9917);">Image Number: 193</div>
<div class="t" style="left:571.84px;top:742px;font-size:14px;color:#e2e2e2;transform:scaleX(0.9794);">BW: 282.2Mbps</div>
<div class="t" style="left:670.30px;top:742px;font-size:14px;color:#e2e2e2;transform:scaleX(1.0159);">664 * 664</div>
<div class="t" style="left:731.90px;top:742px;font-size:14px;color:#e2e2e2;transform:scaleX(0.9329);">Errors: 0</div>
<div class="t" style="left:782.63px;top:742px;font-size:14px;color:#e2e2e2;transform:scaleX(0.9628);">Packets Lost: 0</div>
<div class="t" style="left:875.04px;top:742px;font-size:14px;color:#e2e2e2;transform:scaleX(0.9632);">Display Rate: 30fps</div>
<div class="t" style="left:1051.85px;top:88.2px;font-size:15px;color:#a8a8a8;transform:scaleX(0.9366);">zxc_1234 (00C38216292)</div>
<div class="t" style="left:1041.86px;top:159.5px;font-size:14px;color:#ececec;transform:scaleX(0.9424);">Feature Tree</div>
<div class="t" style="left:1119.48px;top:159.5px;font-size:14px;color:#c8c8c8;">Common F...</div>
<div class="t" style="left:1218.86px;top:159.5px;font-size:14px;color:#c8c8c8;transform:scaleX(0.9899);">Trigger</div>
<div class="t" style="left:1283.74px;top:159.5px;font-size:14px;color:#c8c8c8;transform:scaleX(0.9937);">Advanced ..</div>
<div class="t" style="left:1065.35px;top:246.2px;font-size:15px;color:#e2e2e2;font-weight:bold;transform:scaleX(0.9610);">Favorites</div>
<div class="t" style="left:1065.35px;top:284.2px;font-size:15px;color:#e2e2e2;font-weight:bold;transform:scaleX(0.9659);">Device Control</div>
<div class="t" style="left:1065.35px;top:322.2px;font-size:15px;color:#e2e2e2;font-weight:bold;transform:scaleX(0.9851);">Image Format C...</div>
<div class="t" style="left:1065.35px;top:360.2px;font-size:15px;color:#e2e2e2;font-weight:bold;transform:scaleX(0.9728);">Acquisition Cont...</div>
<div class="t" style="left:1065.35px;top:398.2px;font-size:15px;color:#e2e2e2;font-weight:bold;transform:scaleX(0.9796);">Analog Control</div>
<div class="t" style="left:1065.35px;top:436.2px;font-size:15px;color:#e2e2e2;font-weight:bold;transform:scaleX(0.9870);">Color Transform...</div>
<div class="t" style="left:1065.35px;top:474.2px;font-size:15px;color:#e2e2e2;font-weight:bold;transform:scaleX(0.9913);">Digital IO Control</div>
<div class="t" style="left:1065.35px;top:512.2px;font-size:15px;color:#e2e2e2;font-weight:bold;transform:scaleX(0.9780);">Action Control</div>
<div class="t" style="left:1065.35px;top:550.2px;font-size:15px;color:#e2e2e2;font-weight:bold;transform:scaleX(0.9886);">Counter And Ti...</div>
<div class="t" style="left:1065.35px;top:588.2px;font-size:15px;color:#e2e2e2;font-weight:bold;transform:scaleX(0.9432);">File Access Control</div>
<div class="t" style="left:1065.35px;top:626.2px;font-size:15px;color:#e2e2e2;font-weight:bold;transform:scaleX(0.9703);">Event Control</div>
<div class="t" style="left:1063.65px;top:744.4px;font-size:14px;color:#c8c8c8;transform:scaleX(1.0091);">User Level:</div>
<div class="t" style="left:1252.51px;top:744.4px;font-size:14px;color:#c8c8c8;transform:scaleX(1.0292);">Guru</div>
<!-- ===== RED ANNOTATIONS ===== -->
<div class="red" style="left:90px;top:0px;width:339px;height:30.6px"></div>
<div class="red" style="left:89px;top:35.4px;width:454.6px;height:39.6px"></div>
<div class="red" style="left:5px;top:79.2px;width:258px;height:436.8px"></div>
<div class="red" style="left:2.2px;top:520px;width:262.8px;height:231.7px"></div>
<div class="red" style="left:281px;top:82.8px;width:754.4px;height:673.6px"></div>
<div class="red" style="left:1041px;top:81.2px;width:318.3px;height:676.7px"></div>
<div class="num" style="left:404.2px;top:4px">1</div>
<div class="num" style="left:512.8px;top:41px">2</div>
<div class="num" style="left:192px;top:157px">3</div>
<div class="num" style="left:182.2px;top:531px">4</div>
<div class="num" style="left:720px;top:157.2px">5</div>
<div class="num" style="left:1241px;top:411px">6</div>


</div>
</body>
</html>
